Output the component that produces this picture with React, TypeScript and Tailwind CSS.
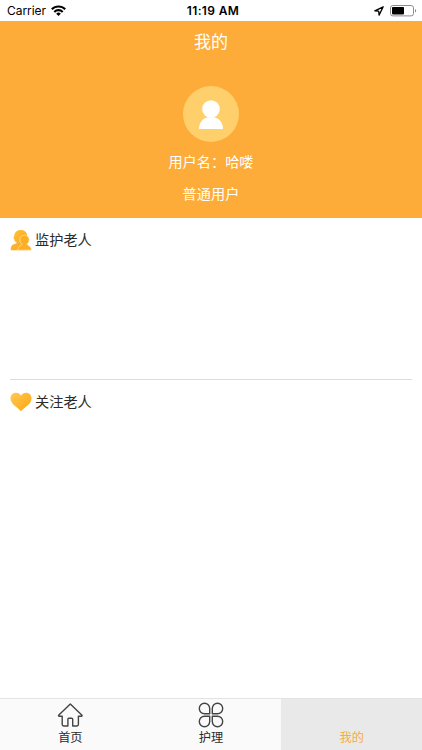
import React from 'react';

const StatusBar: React.FC = () => (
  <header className="relative flex h-[21px] shrink-0 items-center justify-between pl-[7px] pr-[5px] text-black">
    <div className="flex items-center gap-[5px]">
      <span className="text-[12px] leading-[21px] tracking-[-0.05px]">Carrier</span>
      <svg width="15" height="11" viewBox="0 0 15 11" fill="none" stroke="currentColor" strokeWidth="2.1">
        <path d="M.8 4.300a9.400 9.400 0 0 1 13.400 0" />
        <path d="M3.300 6.900a5.900 5.900 0 0 1 8.400 0" />
        <path d="M7.500 11 5.200 8.700a3.300 3.300 0 0 1 4.600 0Z" fill="currentColor" stroke="none" />
      </svg>
    </div>
    <span className="absolute left-1/2 ml-[2px] -translate-x-1/2 whitespace-nowrap text-[12px] font-semibold leading-[21px] tracking-[0.35px]">
      11:19 AM
    </span>
    <div className="flex items-center gap-[6px]">
      <svg width="10" height="10" viewBox="0 0 10 10" fill="none" stroke="currentColor" strokeWidth="1.3" strokeLinejoin="round">
        <path d="M9.200.8.8 4.800l3.900.4.400 3.900Z" />
      </svg>
      <svg width="27" height="12" viewBox="0 0 27 12">
        <rect x="0.5" y="0.5" width="23" height="10.400" rx="2.400" fill="none" stroke="#8c8c8c" />
        <rect x="2" y="2" width="12" height="7.400" rx="0.800" fill="#000" />
        <path d="M25 4c1.600.4 1.600 3 0 3.400Z" fill="#8c8c8c" />
      </svg>
    </div>
  </header>
);

const Avatar: React.FC = () => (
  <div className="flex h-14 w-14 items-center justify-center rounded-full bg-[#ffcf6b]">
    <svg width="24" height="29" viewBox="0 0 24 29" fill="#fff">
      <circle cx="12" cy="9" r="8.800" />
      <path d="M0 29C.2 22.500 4 18 9 17.300h6c5 .7 8.800 5.200 9 11.700Z" />
    </svg>
  </div>
);

const EldersIcon: React.FC = () => (
  <svg width="22" height="22" viewBox="0 0 22 22">
    <defs>
      <linearGradient id="elders" x1="0" y1="0" x2="1" y2="1">
        <stop offset="0" stopColor="#ffc23c" />
        <stop offset="1" stopColor="#fba31c" />
      </linearGradient>
    </defs>
    <path
      d="M10.800 1c3.900 0 6.500 2.600 6.500 6.200 0 2.600-1.200 4.700-2.700 6L14 21.200H.7c-.1-3.600 1-5.400 3.500-6.200 1.600-.5 2.400-.9 2.600-1.600-1.900-.6-2.800-1.800-2.500-3.400C2.800 9.400 3.500 8.500 4.200 7.600 4.200 3.700 6.800 1 10.800 1Z"
      fill="url(#elders)"
    />
    <path
      d="M14.500 6.200c2.900 0 4.700 1.900 4.700 4.400 0 2-.9 3.500-2 4.500 0 1.900 4.200 1.600 4.200 6.100H7.800c0-4.500 4-4.200 4.100-6.100-1.200-1-2.100-2.500-2.100-4.500 0-2.500 1.800-4.400 4.700-4.400Z"
      fill="#fcae25"
      stroke="#fff2cf"
      strokeWidth="0.600"
    />
  </svg>
);

const HeartIcon: React.FC = () => (
  <svg width="22" height="20" viewBox="0 0 22 20">
    <defs>
      <linearGradient id="heart" x1="0" y1="0" x2="1" y2="1">
        <stop offset="0" stopColor="#ffca55" />
        <stop offset="1" stopColor="#fba50f" />
      </linearGradient>
    </defs>
    <path
      d="M11 3.600C12 1.700 13.800.7 16 .7c3.200 0 5.500 2.400 5.500 5.600 0 5.900-6 8.200-10.500 13C6.500 14.500.5 12.200.5 6.300.5 3.100 2.800.7 6 .7c2.200 0 4 1 5 2.900Z"
      fill="url(#heart)"
    />
  </svg>
);

const HomeIcon: React.FC = () => (
  <svg width="26" height="26" viewBox="0 0 26 26" fill="none" stroke="#444" strokeWidth="1.400" strokeLinejoin="round">
    <path d="M13.300 1.900 1.600 13.300c-.2.500 0 .9.600.9h3v8.400c0 .9.500 1.400 1.400 1.400h4.300v-6.800c0-.6.300-.9.900-.9h3c.6 0 .9.300.9.900V24H20c.9 0 1.400-.5 1.400-1.400v-8.400h3c.6 0 .8-.4.600-.9Z" />
  </svg>
);

const CloverIcon: React.FC = () => (
  <svg width="26" height="26" viewBox="0 0 26 26" fill="none" stroke="#444" strokeWidth="1.400" strokeLinejoin="round">
    <path d="M11.700 11.700H6.500A5.200 5.200 0 1 1 11.700 6.500Z" />
    <path d="M14.300 11.700V6.500a5.200 5.200 0 1 1 5.200 5.200Z" />
    <path d="M11.700 14.300v5.200a5.200 5.200 0 1 1-5.200-5.200Z" />
    <path d="M14.300 14.300h5.200a5.200 5.200 0 1 1-5.200 5.200Z" />
  </svg>
);

const TABS = [
  { label: '首页', icon: HomeIcon, active: false },
  { label: '护理', icon: CloverIcon, active: false },
  { label: '我的', icon: null, active: true },
];

const App: React.FC = () => (
  <div lang="zh-CN" className="flex h-[750px] w-full flex-col overflow-hidden bg-white font-['Inter','Noto_Sans_CJK_SC',sans-serif]">
    <StatusBar />

    {/* Profile */}
    <section className="flex h-[197px] shrink-0 flex-col items-center bg-[#fdac39] text-white">
      <h1 className="mt-[9px] text-[17px] leading-6">我的</h1>
      <div className="mt-8">
        <Avatar />
      </div>
      <p className="mt-[9px] text-[14.2px] leading-[21px]">用户名：哈喽</p>
      <p className="mt-[11px] text-[14.2px] leading-[21px]">普通用户</p>
    </section>

    {/* Elder lists */}
    <main className="flex-1 px-[10px] text-[14.2px] text-[#2b2b2b]">
      <section className="h-[162px] border-b border-[#dcdcdc] pt-[11px]">
        <h2 className="flex h-[22px] items-center gap-[3px]">
          <EldersIcon />
          监护老人
        </h2>
      </section>
      <section className="pt-[11px]">
        <h2 className="flex h-[22px] items-center gap-[3px]">
          <HeartIcon />
          关注老人
        </h2>
      </section>
    </main>

    {/* Bottom tabs */}
    <nav className="grid h-[52px] shrink-0 grid-cols-3 border-t border-[#e3e3e3] bg-[#fafafa]">
      {TABS.map(({ label, icon: Icon, active }) => (
        <button
          key={label}
          className={`flex flex-col items-center pt-[3px] text-[12.2px] ${active ? 'bg-[#e9e9e9] text-[#f9aa42]' : 'text-[#2b2b2b]'}`}
        >
          <span className="h-[26px] w-[26px]">{Icon && <Icon />}</span>
          <span className="mt-px leading-[17px]">{label}</span>
        </button>
      ))}
    </nav>
  </div>
);

export default App;
